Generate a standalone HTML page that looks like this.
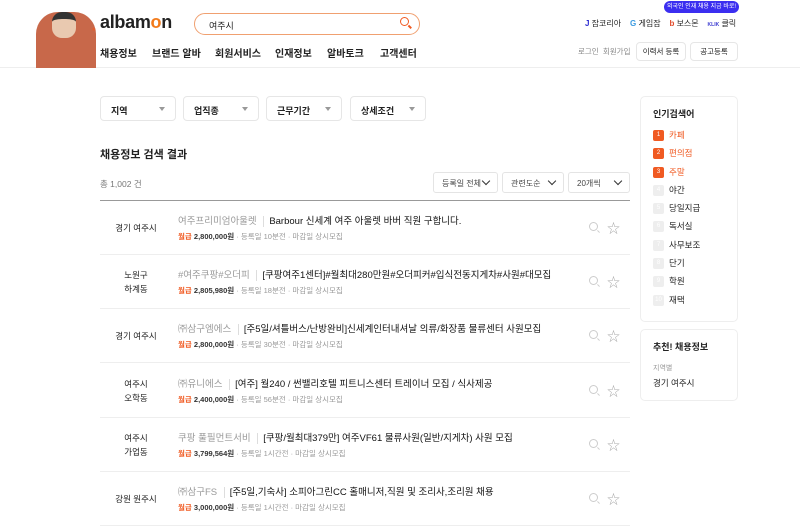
<!DOCTYPE html>
<html><head><meta charset="utf-8"><style>
*{margin:0;padding:0;box-sizing:border-box}
body{width:800px;height:513px;overflow:hidden;background:#fff;font-family:"Liberation Sans","Noto Sans CJK KR",sans-serif;color:#222;position:relative}
.a{position:absolute;white-space:nowrap}
.hdr{position:absolute;left:0;top:0;width:800px;height:68px;border-bottom:1px solid #eee;background:#fff}
.nav{font-size:10px;font-weight:bold;top:45px}
.dd{position:absolute;top:96px;height:25px;width:76px;border:1px solid #e6e6e6;border-radius:4px;font-size:9px;font-weight:bold;padding:7px 10px}
.dd:after{content:"";position:absolute;right:10px;top:10px;border:3px solid transparent;border-top:4px solid #999}
.sel{position:absolute;top:172px;height:21px;border:1px solid #e4e4e4;border-radius:3px;font-size:8px;color:#444;padding:5px 8px}
.chev{position:absolute;right:8px;top:5px;width:6px;height:6px;border-right:1.3px solid #333;border-bottom:1.3px solid #333;transform:rotate(45deg)}
.row{position:absolute;left:100px;width:530px;height:54px;border-bottom:1px solid #eee}
.loc{position:absolute;left:0;width:72px;text-align:center;font-size:8.5px;line-height:14px}
.co{position:absolute;left:78px;top:12px;font-size:9.5px;color:#999}
.ti{font-size:9.5px;color:#111;padding-left:5px;margin-left:4px;border-left:1px solid #ddd}
.info{position:absolute;left:78px;top:30px;font-size:7.5px;color:#999}
.info b{color:#f05a22;font-weight:bold}
.info i{font-style:normal;color:#333;font-weight:bold}
.ic{position:absolute;right:32px;top:21px;width:9px;height:9px;border:1px solid #ccc;border-radius:50%}
.ic:after{content:"";position:absolute;left:7px;top:8px;width:3px;height:1px;background:#ccc;transform:rotate(45deg)}
.st{position:absolute;right:10px;top:17px;font-size:13px;color:#aaa}
.side{position:absolute;left:640px;width:98px;border:1px solid #eee;border-radius:5px}
.kw{position:absolute;left:653px;font-size:8.5px}
.kw span{display:inline-block;width:11px;height:11px;border-radius:2px;background:#eee;color:#fff;font-size:6px;text-align:center;line-height:11px;margin-right:5px;vertical-align:middle}
.kw.h{color:#f05a22}.kw.h span{background:#f05a22}
</style></head><body>
<div class="hdr"></div>
<div class="a" style="left:36px;top:12px;width:60px;height:56px;background:#c8684a;border-radius:22px 22px 0 0"></div>
<div class="a" style="left:52px;top:12px;width:24px;height:26px;background:#e9c9b0;border-radius:10px;border-top:7px solid #333"></div>
<div class="a" style="left:92px;top:26px;color:#f05a22;font-size:9px">*</div>
<div class="a" style="left:100px;top:12px;font-size:18px;font-weight:bold;letter-spacing:-0.3px;color:#222">albam<span style="color:#f27a1a">o</span>n</div>
<div class="a" style="left:194px;top:13px;width:226px;height:22px;border:1px solid #f0a070;border-radius:11px;font-size:9px;padding:5px 14px">여주시</div>
<div class="a" style="left:400px;top:17px;width:9px;height:9px;border:1.5px solid #f05a22;border-radius:50%"></div>
<div class="a" style="left:408px;top:26px;width:4px;height:1.5px;background:#f05a22;transform:rotate(45deg)"></div>
<div class="a nav" style="left:100px">채용정보</div>
<div class="a nav" style="left:152px">브랜드 알바</div>
<div class="a nav" style="left:215px">회원서비스</div>
<div class="a nav" style="left:275px">인재정보</div>
<div class="a nav" style="left:327px">알바토크</div>
<div class="a nav" style="left:380px">고객센터</div>
<div class="a" style="left:664px;top:1px;width:75px;height:12px;background:#3b2ef0;border-radius:6px;color:#fff;font-size:6px;text-align:center;line-height:12px">외국인 인재 채용 지금 바로!</div>
<div class="a" style="left:585px;top:18px;font-size:8px"><b style="color:#2a2ad0">J</b> 잡코리아 &nbsp;&nbsp;&nbsp;<b style="color:#3a9ae0">G</b> 게임잡 &nbsp;&nbsp;&nbsp;<b style="color:#e04a2a">b</b> 보스몬 &nbsp;&nbsp;&nbsp;<b style="color:#3a3ad0;font-size:5px">KLIK</b> 클릭</div>
<div class="a" style="left:578px;top:46px;font-size:7.5px;color:#888">로그인 &nbsp;회원가입</div>
<div class="a" style="left:636px;top:42px;width:50px;height:19px;border:1px solid #e6e6e6;border-radius:4px;font-size:7.5px;text-align:center;line-height:17px">이력서 등록</div>
<div class="a" style="left:690px;top:42px;width:48px;height:19px;border:1px solid #e6e6e6;border-radius:4px;font-size:7.5px;text-align:center;line-height:17px">공고등록</div>

<div class="dd" style="left:100px">지역</div>
<div class="dd" style="left:183px">업직종</div>
<div class="dd" style="left:266px">근무기간</div>
<div class="dd" style="left:350px">상세조건</div>
<div class="a" style="left:100px;top:146px;font-size:11px;font-weight:bold">채용정보 검색 결과</div>
<div class="a" style="left:100px;top:178px;font-size:8.5px;color:#777">총 1,002 건</div>
<div class="sel" style="left:433px;width:65px">등록일 전체<i class="chev"></i></div>
<div class="sel" style="left:502px;width:62px">관련도순<i class="chev"></i></div>
<div class="sel" style="left:568px;width:62px">20개씩<i class="chev"></i></div>
<div class="a" style="left:100px;top:200px;width:530px;height:1px;background:#999"></div>

<div class="row" style="top:201px"><div class="loc" style="top:20px">경기 여주시</div><div class="co">여주프리미엄아울렛 <span class="ti">Barbour 신세계 여주 아울렛 바버 직원 구합니다.</span></div><div class="info"><b>월급</b> <i>2,800,000원</i> · 등록일 10분전 · 마감일 상시모집</div><div class="ic"></div><div class="st">☆</div></div>
<div class="row" style="top:255px"><div class="loc" style="top:13px">노원구<br>하계동</div><div class="co">#여주쿠팡#오더피 <span class="ti">[쿠팡여주1센터]#월최대280만원#오더피커#입식전동지게차#사원#대모집</span></div><div class="info"><b>월급</b> <i>2,805,980원</i> · 등록일 18분전 · 마감일 상시모집</div><div class="ic"></div><div class="st">☆</div></div>
<div class="row" style="top:309px"><div class="loc" style="top:20px">경기 여주시</div><div class="co">㈜삼구엠에스 <span class="ti">[주5일/셔틀버스/난방완비]신세계인터내셔날 의류/화장품 물류센터 사원모집</span></div><div class="info"><b>월급</b> <i>2,800,000원</i> · 등록일 30분전 · 마감일 상시모집</div><div class="ic"></div><div class="st">☆</div></div>
<div class="row" style="top:364px"><div class="loc" style="top:13px">여주시<br>오학동</div><div class="co">㈜유니에스 <span class="ti">[여주] 월240 / 썬밸리호텔 피트니스센터 트레이너 모집 / 식사제공</span></div><div class="info"><b>월급</b> <i>2,400,000원</i> · 등록일 56분전 · 마감일 상시모집</div><div class="ic"></div><div class="st">☆</div></div>
<div class="row" style="top:418px"><div class="loc" style="top:13px">여주시<br>가업동</div><div class="co">쿠팡 풀필먼트서비 <span class="ti">[쿠팡/월최대379만] 여주VF61 물류사원(일반/지게차) 사원 모집</span></div><div class="info"><b>월급</b> <i>3,799,564원</i> · 등록일 1시간전 · 마감일 상시모집</div><div class="ic"></div><div class="st">☆</div></div>
<div class="row" style="top:472px"><div class="loc" style="top:20px">강원 원주시</div><div class="co">㈜삼구FS <span class="ti">[주5일,기숙사] 소피아그린CC 홀매니저,직원 및 조리사,조리원 채용</span></div><div class="info"><b>월급</b> <i>3,000,000원</i> · 등록일 1시간전 · 마감일 상시모집</div><div class="ic"></div><div class="st">☆</div></div>

<div class="side" style="top:96px;height:226px"></div>
<div class="a" style="left:653px;top:107px;font-size:9px;font-weight:bold">인기검색어</div>
<div class="kw h a" style="top:129px"><span>1</span>카페</div>
<div class="kw h a" style="top:147px"><span>2</span>편의점</div>
<div class="kw h a" style="top:166px"><span>3</span>주말</div>
<div class="kw a" style="top:184px"><span>4</span>야간</div>
<div class="kw a" style="top:202px"><span>5</span>당일지급</div>
<div class="kw a" style="top:220px"><span>6</span>독서실</div>
<div class="kw a" style="top:239px"><span>7</span>사무보조</div>
<div class="kw a" style="top:257px"><span>8</span>단기</div>
<div class="kw a" style="top:275px"><span>9</span>학원</div>
<div class="kw a" style="top:294px"><span>10</span>재택</div>
<div class="side" style="top:329px;height:72px"></div>
<div class="a" style="left:653px;top:340px;font-size:9px;font-weight:bold">추천! 채용정보</div>
<div class="a" style="left:653px;top:363px;font-size:7px;color:#999">지역별</div>
<div class="a" style="left:653px;top:377px;font-size:8.5px">경기 여주시</div>
</body></html>
